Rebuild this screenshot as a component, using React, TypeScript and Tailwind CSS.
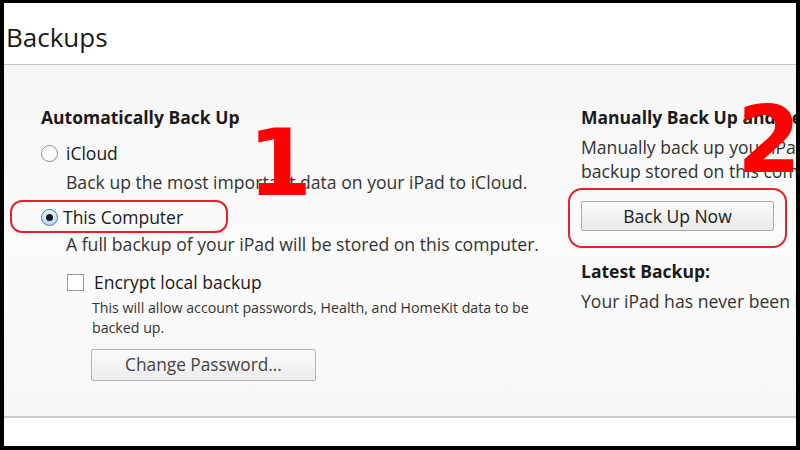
import React from "react";

const font = { fontFamily: '"Open Sans", "Noto Sans", sans-serif' };
const numFont = { fontFamily: '"DejaVu Sans", "Liberation Sans", sans-serif' };

function Radio({ checked }: { checked: boolean }) {
  if (checked) {
    return (
      <span className="flex h-[17px] w-[17px] shrink-0 items-center justify-center rounded-full border border-[#3c7fb1] bg-gradient-to-b from-[#e3f1fb] to-[#b9daf3]">
        <span className="h-[7px] w-[7px] rounded-full bg-[#1a1a1a]" />
      </span>
    );
  }
  return <span className="h-[17px] w-[17px] shrink-0 rounded-full border border-[#8a8a8a] bg-white" />;
}

export default function App() {
  return (
    <div className="h-[450px] w-[800px] overflow-hidden bg-black pb-[4px] pl-[4px] pr-[4px] pt-[3px]" style={font}>
      <div className="relative flex h-full w-full flex-col overflow-hidden bg-white">
        <div className="flex h-[62px] shrink-0 items-center border-b border-[#c4c4c4] pl-[2px] pt-[6px]">
          <h1 className="text-[26px] leading-none text-[#1a1a1a]">Backups</h1>
        </div>
        <div className="flex h-[353px] shrink-0 border-b-2 border-[#c8c8c8] bg-gradient-to-b from-[#f6f6f6] via-[#fbfbfb] to-[#f7f7f7] pl-[37px] pt-[40px]">
          <div className="w-[540px] shrink-0">
            <div className="text-[17.5px] font-bold leading-[24px] text-[#1a1a1a]">Automatically Back Up</div>
            <div className="mt-[12px] flex items-center gap-[8px]">
              <Radio checked={false} />
              <span className="text-[17.5px] leading-[24px] text-[#1a1a1a]">iCloud</span>
            </div>
            <div className="mt-[6px] pl-[25px] text-[17.6px] leading-[22px] text-[#333]">
              Back up the most important data on your iPad to iCloud.
            </div>
            <div className="mt-[12px] flex items-center gap-[5px]">
              <Radio checked={true} />
              <span className="text-[17.5px] leading-[24px] text-[#1a1a1a]">This Computer</span>
            </div>
            <div className="mt-[4px] pl-[25px] text-[17.6px] leading-[22px] text-[#333]">
              A full backup of your iPad will be stored on this computer.
            </div>
            <div className="mt-[15px] flex items-center gap-[10px] pl-[26px]">
              <span className="h-[17px] w-[17px] shrink-0 border border-[#9a9a9a] bg-white" />
              <span className="text-[17.5px] leading-[24px] text-[#1a1a1a]">Encrypt local backup</span>
            </div>
            <div className="mt-[4px] pl-[51px] text-[14.2px] leading-[20px] text-[#333]">
              This will allow account passwords, Health, and HomeKit data to be
              <br />
              backed up.
            </div>
            <div className="ml-[50px] mt-[11px] flex h-[32px] w-[225px] items-center justify-center rounded-[2px] border border-[#b5b5b5] bg-gradient-to-b from-[#fbfbfb] to-[#ececec] text-[17.3px] text-[#444]">
              Change Password...
            </div>
          </div>
          <div className="min-w-0 flex-1 whitespace-nowrap">
            <div className="text-[17.5px] font-bold leading-[24px] text-[#1a1a1a]">Manually Back Up and Restore</div>
            <div className="mt-[6px] text-[17.6px] leading-[24px] text-[#333]">
              Manually back up your iPad to this computer or restore a
              <br />
              backup stored on this computer.
            </div>
            <div className="mt-[18px] flex h-[30px] w-[193px] items-center justify-center rounded-[2px] border border-[#acacac] bg-gradient-to-b from-[#fafafa] to-[#e9e9e9] text-[17.5px] text-[#1a1a1a]">
              Back Up Now
            </div>
            <div className="mt-[28px] text-[17.5px] font-bold leading-[24px] text-[#1a1a1a]">Latest Backup:</div>
            <div className="mt-[6px] text-[17.6px] leading-[24px] text-[#333]">Your iPad has never been backed up to this computer.</div>
          </div>
        </div>

        {/* annotations */}
        <div className="pointer-events-none absolute left-[6px] top-[197px] h-[33px] w-[218px] rounded-[12px] border-2 border-[#e5222a]" />
        <div className="pointer-events-none absolute left-[564px] top-[185px] h-[60px] w-[219px] rounded-[14px] border-2 border-[#e5222a]" />
        <div className="pointer-events-none absolute left-[244px] top-[115px] text-[92px] font-bold leading-none text-[#ff0000]" style={numFont}>1</div>
        <div className="pointer-events-none absolute left-[733px] top-[92px] text-[92px] font-bold leading-none text-[#ff0000]" style={numFont}>2</div>
      </div>
    </div>
  );
}
